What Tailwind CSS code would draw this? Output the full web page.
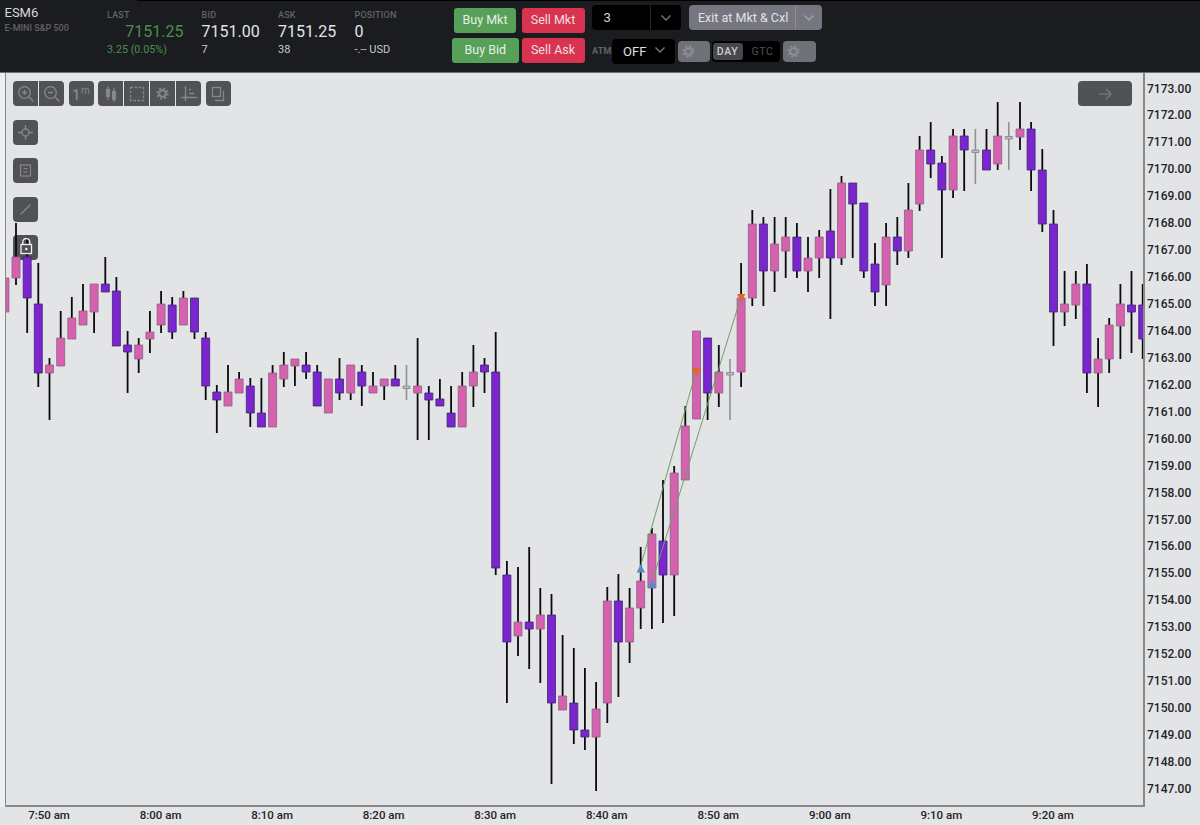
<!DOCTYPE html>
<html>
<head>
<meta charset="utf-8">
<script src="https://cdn.jsdelivr.net/npm/@tailwindcss/browser@4"></script>
</head>
<body class="m-0 [font-family:Roboto,sans-serif]">
<div class="w-[1200px] h-[825px] overflow-hidden bg-[#e3e4e6] flex flex-col">

  <!-- Header -->
  <header class="relative h-[72px] shrink-0 bg-[#1b1c20] flex">
    <div class="absolute top-0 left-[137px] right-0 h-px bg-black"></div>

    <div class="w-[107px] pl-[4.5px] pt-[5px]">
      <div class="text-[13px] leading-[16px] text-[#d9d9da]">ESM6</div>
      <div class="text-[9px] leading-[13px] mt-[0.5px] font-medium text-[#626367]">E-MINI S&amp;P 500</div>
    </div>

    <div class="w-[94.5px] pt-[9px]">
      <div class="text-[9px] leading-[12px] font-medium tracking-[0.2px] text-[#626367]">LAST</div>
      <div class="w-[76.5px] text-right text-[16px] leading-[22px] text-[#4c8f4d]">7151.25</div>
      <div class="text-[10.75px] leading-[14px] text-[#4c8f4d]">3.25 (0.05%)</div>
    </div>
    <div class="w-[76.5px] pt-[9px]">
      <div class="text-[9px] leading-[12px] font-medium tracking-[0.2px] text-[#626367]">BID</div>
      <div class="text-[16px] leading-[22px] text-[#e4e4e5]">7151.00</div>
      <div class="text-[11px] leading-[14px] text-[#c9c9ca]">7</div>
    </div>
    <div class="w-[76.5px] pt-[9px]">
      <div class="text-[9px] leading-[12px] font-medium tracking-[0.2px] text-[#626367]">ASK</div>
      <div class="text-[16px] leading-[22px] text-[#e4e4e5]">7151.25</div>
      <div class="text-[11px] leading-[14px] text-[#c9c9ca]">38</div>
    </div>
    <div class="w-[97px] pt-[9px]">
      <div class="text-[9px] leading-[12px] font-medium tracking-[0.2px] text-[#626367]">POSITION</div>
      <div class="text-[16px] leading-[22px] text-[#e4e4e5]">0</div>
      <div class="text-[11px] leading-[14px] text-[#c9c9ca]">-.-- USD</div>
    </div>

    <div class="flex flex-col pt-[5px]">
      <!-- Row 1 -->
      <div class="flex items-start h-[33px]">
        <div class="ml-[2.5px] mt-[3px] w-[62px] h-[25px] rounded-[3px] bg-[#56a157] text-[#e6efe6] text-[12.5px] flex items-center justify-center">Buy Mkt</div>
        <div class="ml-[5.5px] mt-[3px] w-[63px] h-[25px] rounded-[3px] bg-[#d9344f] text-[#f0dfe2] text-[12.5px] flex items-center justify-center">Sell Mkt</div>
        <div class="ml-[7px] w-[89px] h-[25px] rounded-[4px] bg-black flex items-center">
          <div class="w-[59.5px] h-full pl-[12px] text-[13px] leading-[25px] text-[#d5d5d5] border-r border-[#26272a]">3</div>
          <div class="flex-1 flex justify-center">
            <svg width="12" height="8" viewBox="0 0 12 8" fill="none" stroke="#77787c" stroke-width="1.4"><path d="M1.5 1.5 6 6l4.500-4.500"/></svg>
          </div>
        </div>
        <div class="ml-[8.5px] w-[132.5px] h-[25px] rounded-[4px] bg-[#75767f] flex items-center">
          <div class="w-[107px] h-full pl-[9px] text-[12.5px] leading-[25px] text-[#e2e2e4] border-r border-[#8a8b93] whitespace-nowrap">Exit at Mkt &amp; Cxl</div>
          <div class="flex-1 flex justify-center">
            <svg width="12" height="8" viewBox="0 0 12 8" fill="none" stroke="#a3a4ab" stroke-width="1.4"><path d="M1.500 1.500 6 6l4.500-4.500"/></svg>
          </div>
        </div>
      </div>
      <!-- Row 2 -->
      <div class="flex items-start h-[27px]">
        <div class="w-[67.5px] h-[25px] rounded-[3px] bg-[#56a157] text-[#e6efe6] text-[12.5px] flex items-center justify-center">Buy Bid</div>
        <div class="ml-[2.5px] w-[63px] h-[25px] rounded-[3px] bg-[#d9344f] text-[#f0dfe2] text-[12.5px] flex items-center justify-center">Sell Ask</div>
        <div class="ml-[7.5px] w-[19.5px] mt-[8px] text-[9px] leading-[11px] font-bold tracking-[0.2px] text-[#626367]">ATM</div>
        <div class="w-[63px] h-[25px] mt-[1px] rounded-[4px] bg-black flex items-center pl-[11.5px] pr-[9px] justify-between">
          <span class="text-[13px] text-[#e0e0e0] leading-none">OFF</span>
          <svg class="mb-[4px]" width="12" height="8" viewBox="0 0 12 8" fill="none" stroke="#77787c" stroke-width="1.400"><path d="M1.500 1.500 6 6l4.500-4.500"/></svg>
        </div>
        <div class="ml-[3px] mt-[3px] w-[32.5px] h-[21px] rounded-[4px] bg-[#6f7078] flex items-center pl-[4px]">
          <svg width="13" height="13" viewBox="-6.500 -6.500 13 13" fill="none" stroke="#8e8f95"><circle r="3.300" stroke-width="2"/><circle r="5.200" stroke-width="1.800" stroke-dasharray="2.100 1.984"/></svg>
        </div>
        <div class="ml-[1.5px] mt-[3px] w-[68px] h-[21px] rounded-[4px] bg-black flex items-center pl-[1px] text-[10.5px] tracking-[0.6px]">
          <div class="w-[30px] h-[17px] rounded-[3px] bg-[#47484e] text-[#cfcfd2] flex items-center justify-center font-medium">DAY</div>
          <div class="ml-[9px] text-[#4f5055]">GTC</div>
        </div>
        <div class="ml-[3.5px] mt-[3px] w-[32.5px] h-[21px] rounded-[4px] bg-[#6f7078] flex items-center pl-[4px]">
          <svg width="13" height="13" viewBox="-6.500 -6.500 13 13" fill="none" stroke="#8e8f95"><circle r="3.300" stroke-width="2"/><circle r="5.200" stroke-width="1.800" stroke-dasharray="2.100 1.984"/></svg>
        </div>
      </div>
    </div>
  </header>

  <!-- Chart row -->
  <div class="flex h-[735px] shrink-0 border-t border-[#6f7074]">
    <div class="w-[5px] shrink-0 bg-[#eeeff0]"></div>
    <div class="relative w-[1140px] shrink-0 h-[734px] border-l border-r-2 border-b-2 border-[#88898c] overflow-hidden">

      <!-- Toolbar -->
      <div class="absolute left-[7px] top-[8px] flex flex-col gap-[14px]">
        <div class="flex h-[25px] text-[#87888c]">
          <div class="flex gap-px rounded-[4px] overflow-hidden">
            <div class="w-[25px] h-[25px] bg-[#505256] flex items-center justify-center">
              <svg width="18" height="18" viewBox="0 0 18 18" fill="none" stroke="currentColor" stroke-width="1.300"><circle cx="7.500" cy="7.500" r="5.800"/><path d="M11.700 11.700 16.500 16.500M7.500 5v5M5 7.500h5"/></svg>
            </div>
            <div class="w-[25px] h-[25px] bg-[#505256] flex items-center justify-center">
              <svg width="18" height="18" viewBox="0 0 18 18" fill="none" stroke="currentColor" stroke-width="1.300"><circle cx="7.500" cy="7.500" r="5.800"/><path d="M11.700 11.700 16.500 16.500M5 7.500h5"/></svg>
            </div>
          </div>
          <div class="ml-[4.500px] w-[25px] h-[25px] rounded-[4px] bg-[#505256] flex items-center justify-center">
            <span class="text-[14px] leading-none mt-[2px] font-medium">1</span><span class="text-[10px] leading-none mb-[6px] ml-[1px]">m</span>
          </div>
          <div class="ml-[4.500px] flex gap-px rounded-[4px] overflow-hidden">
            <div class="w-[25px] h-[25px] bg-[#505256] flex items-center justify-center">
              <svg width="16" height="18" viewBox="0 0 16 18" fill="none" stroke="currentColor" stroke-width="1.200"><path d="M5 1.500v14M11 3v14"/><rect x="3.500" y="4.500" width="3" height="7" fill="currentColor"/><rect x="9.500" y="6.500" width="3" height="8" fill="currentColor"/></svg>
            </div>
            <div class="w-[25px] h-[25px] bg-[#505256] flex items-center justify-center">
              <svg width="16" height="16" viewBox="0 0 16 16" fill="none" stroke="currentColor" stroke-width="1.300" stroke-dasharray="2.600 1.600"><rect x="1.500" y="1.500" width="13" height="13"/></svg>
            </div>
            <div class="w-[25px] h-[25px] bg-[#505256] flex items-center justify-center">
              <svg width="13" height="13" viewBox="-6.500 -6.500 13 13" fill="none" stroke="currentColor"><circle r="3.300" stroke-width="2"/><circle r="5.200" stroke-width="1.800" stroke-dasharray="2.100 1.984"/></svg>
            </div>
            <div class="w-[25px] h-[25px] bg-[#505256] flex items-center justify-center">
              <svg width="18" height="18" viewBox="0 0 18 18" fill="none" stroke="currentColor" stroke-width="1.300"><path d="M5.500 1v15M1 12.500h16M9 4.500h2M9 8.500h5"/></svg>
            </div>
          </div>
          <div class="ml-[4.500px] w-[25px] h-[25px] rounded-[4px] bg-[#505256] flex items-center justify-center">
            <svg width="16" height="16" viewBox="0 0 16 16" fill="none" stroke="currentColor" stroke-width="1.300"><rect x="2.500" y="1.500" width="8" height="9"/><path d="M13.500 5v9.500H5"/></svg>
          </div>
        </div>
        <div class="flex flex-col gap-[13.300px] w-[25px] text-[#87888c]">
          <div class="w-[25px] h-[25px] rounded-[4px] bg-[#505256] flex items-center justify-center">
            <svg width="17" height="17" viewBox="0 0 17 17" fill="none" stroke="currentColor" stroke-width="1.300"><circle cx="8.500" cy="8.500" r="3.500"/><path d="M8.500 1v4M8.500 12v4M1 8.500h4M12 8.500h4"/></svg>
          </div>
          <div class="w-[25px] h-[25px] rounded-[4px] bg-[#505256] flex items-center justify-center">
            <svg width="13" height="13" viewBox="0 0 13 13" fill="none" stroke="currentColor" stroke-width="1.200"><rect x="1.500" y="1" width="10" height="11"/><path d="M4.500 4.500h4M4.500 8h4"/></svg>
          </div>
          <div class="w-[25px] h-[25px] rounded-[4px] bg-[#505256] flex items-center justify-center">
            <svg width="13" height="13" viewBox="0 0 13 13" fill="none" stroke="currentColor" stroke-width="1.300"><path d="M1.500 11.500 11.500 1.500"/></svg>
          </div>
          <div class="w-[25px] h-[25px] rounded-[4px] bg-[#505256]"></div>
        </div>
      </div>
      <div class="absolute right-[11.500px] top-[8px] w-[53.500px] h-[25px] rounded-[4px] bg-[#505256] flex items-center justify-center">
        <svg width="14" height="14" viewBox="0 0 14 14" fill="none" stroke="#7d7e82" stroke-width="1.100"><path d="M1 7h12M8 2l5 5-5 5"/></svg>
      </div>

      <!-- Candles -->
      <svg class="absolute left-0 top-0 block pointer-events-none" width="1137" height="732" viewBox="5.500 73 1137 732">
        <path fill="none" stroke="#0b0b0d" stroke-width="1.800" d="M4.400 278V318M15.500 223V285M26.700 237V333M37.800 263V387M49 358V420M60.200 311V366M71.300 297V339M82.500 284V325M93.600 284V333M104.800 257V292M115.900 277V346M127.100 331V393M138.200 338V373M149.400 311V353M160.600 291V333M171.700 297V339M182.900 291V325M194 298V339M205.200 332V400M216.300 385V433M227.500 365V406M238.600 372V393M249.800 378V427M260.900 378V427M272.100 365V427M283.300 352V387M294.400 359V386M305.600 352V379M316.700 365V406M339 358V400M350.200 365V400M361.300 365V406M372.500 372V393M383.700 379V400M394.800 365V386M417.100 338V440M428.300 386V440M439.400 379V406M450.600 386V427M461.700 372V427M472.900 345V407M484 358V393M495.200 332V575M506.400 561V703M517.500 567V656M528.700 547V669M539.800 588V683M551 594V784M562.100 635V710M573.300 648V744M584.400 668V750M595.600 682V791M606.800 587V723M617.900 574V697M629.100 588V663M640.200 547V629M651.400 528V629M662.500 480V623M673.700 466V616M684.800 406V480M707.100 338V420M718.300 345V407M740.600 263V387M751.800 210V306M762.900 217V306M774.100 217V292M785.200 217V278M796.400 223V278M807.500 237V292M818.700 230V278M829.900 189V319M841 176V265M852.200 183V258M863.300 203V278M874.500 243V306M885.600 223V306M896.800 217V265M907.900 183V258M919.100 136V211M930.200 122V178M941.400 156V258M952.600 129V198M963.700 129V191M986 129V170M997.200 102V170M1019.500 102V150M1030.600 122V191M1041.800 149V232M1053 210V346M1064.100 271V326M1075.300 271V319M1086.400 264V393M1097.600 338V407M1108.700 318V373M1119.900 284V359M1131 271V353M1142.200 284V359"/>
        <path fill="none" stroke="#8d9196" stroke-width="1.600" d="M406 365V400M729.500 359V420M974.900 129V184M1008.300 122V170"/>
        <path fill="#b9bbc2" stroke="#8d9196" stroke-width="1" d="M402.500 386h7v2.500h-7zM726 372.500h7v2.500h-7zM971.400 150h7v2.500h-7zM1004.800 136.500h7v2.500h-7z"/>
        <path fill="#d562ae" stroke="#8f5d86" stroke-width="0.800" d="M.4 278h8V312h-8zM11.500 257h8V278h-8zM45 365h8V373h-8zM56.200 338h8V366h-8zM67.300 318h8V339h-8zM78.500 311h8V325h-8zM89.600 284h8V312h-8zM134.200 345h8V359h-8zM145.400 332h8V339h-8zM156.600 304h8V325h-8zM178.900 298h8V325h-8zM223.500 392h8V406h-8zM234.600 379h8V393h-8zM268.100 373h8V427h-8zM279.300 365h8V379h-8zM290.400 359h8V366h-8zM323.900 379h8V413h-8zM346.200 365h8V393h-8zM368.500 386h8V393h-8zM379.700 379h8V386h-8zM413.100 386h8V393h-8zM457.700 386h8V427h-8zM468.900 372h8V386h-8zM513.500 622h8V636h-8zM535.800 615h8V629h-8zM558.100 696h8V710h-8zM591.600 709h8V737h-8zM602.800 601h8V703h-8zM625.100 608h8V642h-8zM636.200 581h8V608h-8zM647.400 534h8V588h-8zM669.700 473h8V575h-8zM680.800 426h8V480h-8zM692 331h8V419h-8zM714.300 372h8V393h-8zM736.600 298h8V372h-8zM747.800 224h8V298h-8zM770.100 244h8V271h-8zM781.200 237h8V251h-8zM803.500 258h8V271h-8zM814.700 237h8V258h-8zM837 183h8V258h-8zM881.600 237h8V285h-8zM903.900 210h8V251h-8zM915.100 150h8V204h-8zM948.600 136h8V190h-8zM993.200 136h8V164h-8zM1015.500 129h8V137h-8zM1060.100 304h8V312h-8zM1071.300 284h8V305h-8zM1093.600 359h8V373h-8zM1104.700 325h8V359h-8zM1115.900 304h8V326h-8z"/>
        <path fill="#7b25cf" stroke="#3f2470" stroke-width="0.800" d="M22.700 257h8V298h-8zM33.800 304h8V373h-8zM100.800 284h8V292h-8zM111.900 291h8V346h-8zM123.100 345h8V352h-8zM167.700 305h8V332h-8zM190 298h8V332h-8zM201.200 338h8V386h-8zM212.300 392h8V400h-8zM245.800 386h8V413h-8zM256.900 413h8V427h-8zM301.600 365h8V372h-8zM312.700 372h8V406h-8zM335 379h8V393h-8zM357.300 372h8V386h-8zM390.800 379h8V386h-8zM424.300 393h8V400h-8zM435.400 399h8V406h-8zM446.600 413h8V427h-8zM480 365h8V372h-8zM491.200 372h8V568h-8zM502.400 575h8V642h-8zM524.700 622h8V629h-8zM547 615h8V703h-8zM569.300 703h8V730h-8zM580.400 730h8V737h-8zM613.900 601h8V642h-8zM658.500 541h8V575h-8zM703.100 338h8V393h-8zM758.900 224h8V271h-8zM792.400 237h8V271h-8zM825.900 231h8V258h-8zM848.200 183h8V204h-8zM859.300 203h8V271h-8zM870.500 264h8V292h-8zM892.800 237h8V251h-8zM926.200 150h8V164h-8zM937.400 163h8V190h-8zM959.700 136h8V150h-8zM982 150h8V170h-8zM1026.600 129h8V170h-8zM1037.800 170h8V224h-8zM1049 224h8V312h-8zM1082.400 284h8V373h-8zM1127 305h8V312h-8zM1138.200 305h8V339h-8z"/>
        <path fill="none" stroke="#6f9f66" stroke-width="1" d="M640 566.500 696 370M651.700 581.500 740.700 296.500"/>
        <path fill="#4f8fc9" d="M640.300 564.500l4.300 8h-8.600zM651.600 579.500l4.300 8h-8.600z"/>
        <path fill="#dd6a25" d="M691.800 368h8.400l-4.200 9zM736.500 294h8.400l-4.200 8z"/>
        <g fill="none" stroke="#f0f0f2" stroke-width="1.300">
          <path d="M22.300 244.500v-2.500a3.500 3.500 0 0 1 7 0v2.500"/>
          <rect x="20.500" y="244.500" width="10.500" height="9" fill="#505256"/>
          <circle cx="25.800" cy="249" r="0.600"/>
        </g>
      </svg>
    </div>

    <!-- Price axis -->
    <div class="flex-1 pl-[2px] pt-[2.500px] text-[12px] font-medium text-[#222326]">
      <div class="h-[26.940px] leading-[26.940px]">7173.00</div>
      <div class="h-[26.940px] leading-[26.940px]">7172.00</div>
      <div class="h-[26.940px] leading-[26.940px]">7171.00</div>
      <div class="h-[26.940px] leading-[26.940px]">7170.00</div>
      <div class="h-[26.940px] leading-[26.940px]">7169.00</div>
      <div class="h-[26.940px] leading-[26.940px]">7168.00</div>
      <div class="h-[26.940px] leading-[26.940px]">7167.00</div>
      <div class="h-[26.940px] leading-[26.940px]">7166.00</div>
      <div class="h-[26.940px] leading-[26.940px]">7165.00</div>
      <div class="h-[26.940px] leading-[26.940px]">7164.00</div>
      <div class="h-[26.940px] leading-[26.940px]">7163.00</div>
      <div class="h-[26.940px] leading-[26.940px]">7162.00</div>
      <div class="h-[26.940px] leading-[26.940px]">7161.00</div>
      <div class="h-[26.940px] leading-[26.940px]">7160.00</div>
      <div class="h-[26.940px] leading-[26.940px]">7159.00</div>
      <div class="h-[26.940px] leading-[26.940px]">7158.00</div>
      <div class="h-[26.940px] leading-[26.940px]">7157.00</div>
      <div class="h-[26.940px] leading-[26.940px]">7156.00</div>
      <div class="h-[26.940px] leading-[26.940px]">7155.00</div>
      <div class="h-[26.940px] leading-[26.940px]">7154.00</div>
      <div class="h-[26.940px] leading-[26.940px]">7153.00</div>
      <div class="h-[26.940px] leading-[26.940px]">7152.00</div>
      <div class="h-[26.940px] leading-[26.940px]">7151.00</div>
      <div class="h-[26.940px] leading-[26.940px]">7150.00</div>
      <div class="h-[26.940px] leading-[26.940px]">7149.00</div>
      <div class="h-[26.940px] leading-[26.940px]">7148.00</div>
      <div class="h-[26.940px] leading-[26.940px]">7147.00</div>
    </div>
  </div>

  <!-- Time axis -->
  <div class="flex pl-[6px] pt-px gap-[25.550px] text-[11.500px] leading-[15px] font-medium text-[#222326]">
    <div class="w-[86px] text-center">7:50 am</div>
    <div class="w-[86px] text-center">8:00 am</div>
    <div class="w-[86px] text-center">8:10 am</div>
    <div class="w-[86px] text-center">8:20 am</div>
    <div class="w-[86px] text-center">8:30 am</div>
    <div class="w-[86px] text-center">8:40 am</div>
    <div class="w-[86px] text-center">8:50 am</div>
    <div class="w-[86px] text-center">9:00 am</div>
    <div class="w-[86px] text-center">9:10 am</div>
    <div class="w-[86px] text-center">9:20 am</div>
  </div>
</div>
</body>
</html>
